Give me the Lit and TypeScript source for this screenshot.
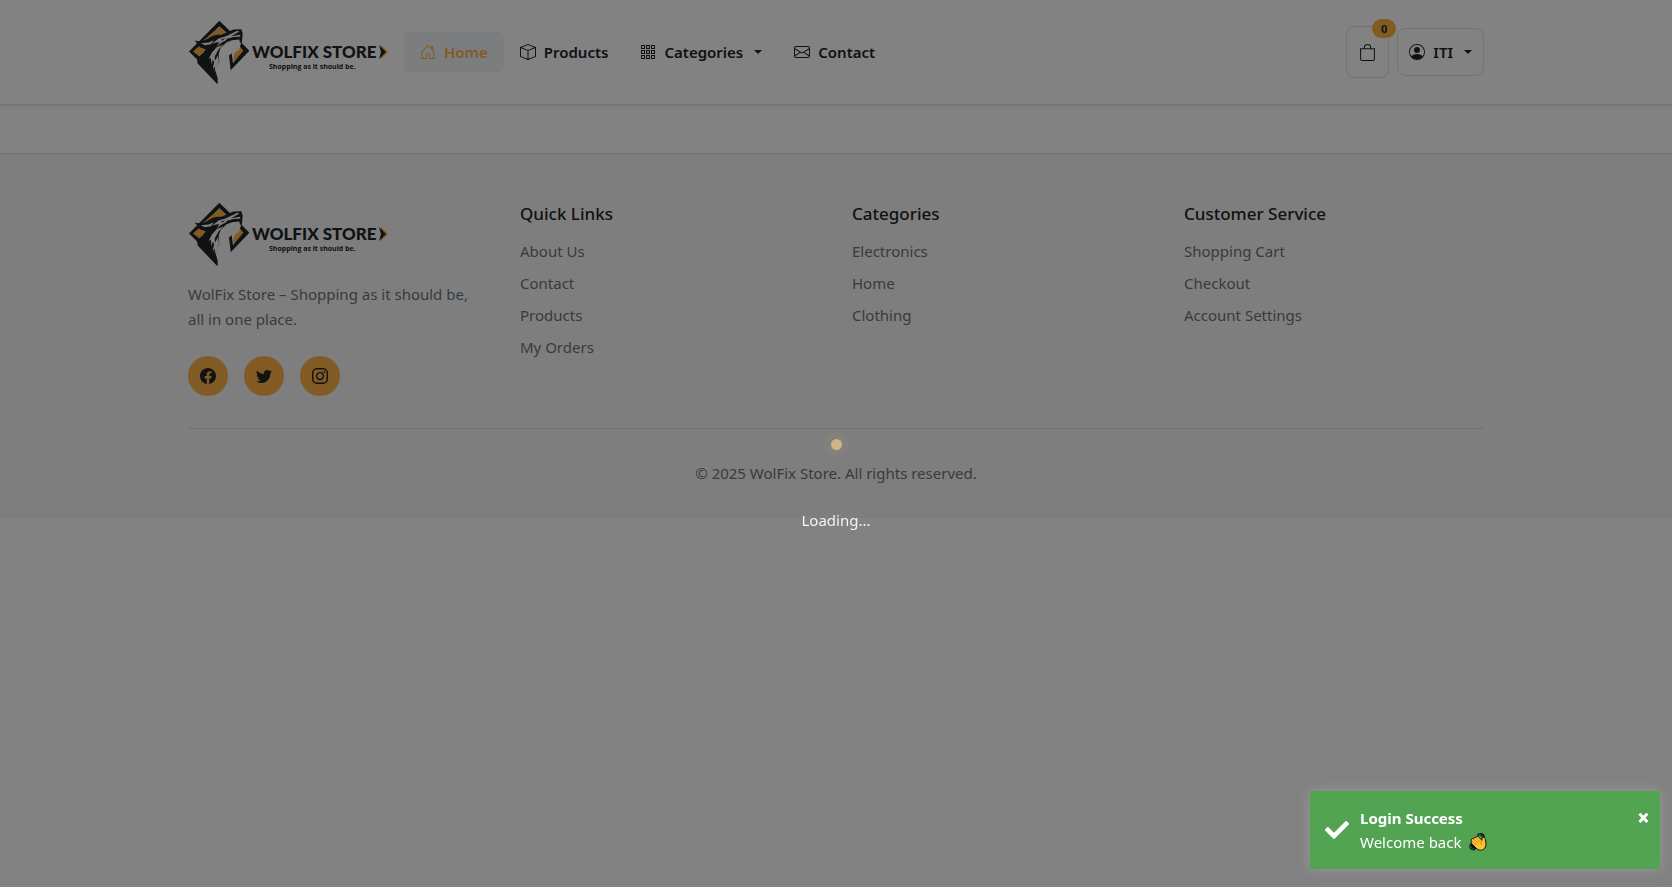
import { LitElement, html, css, svg } from "lit";
import { customElement, property, state } from "lit/decorators.js";

const icons = {
  house: svg`<path d="M8.354 1.146a.5.5 0 0 0-.708 0l-6 6A.5.5 0 0 0 1.5 7.5v7a.5.5 0 0 0 .5.5h4.5a.5.5 0 0 0 .5-.5v-4h2v4a.5.5 0 0 0 .5.5H14a.5.5 0 0 0 .5-.5v-7a.5.5 0 0 0-.146-.354L13 5.793V2.5a.5.5 0 0 0-.5-.5h-1a.5.5 0 0 0-.5.5v1.293zM2.5 14V7.707l5.5-5.5 5.5 5.5V14H10v-4a.5.5 0 0 0-.5-.5h-3a.5.5 0 0 0-.5.5v4z"/>`,
  box: svg`<path fill-rule="evenodd" d="M8.186 1.113a.5.5 0 0 0-.372 0L1.846 3.5 8 5.961 14.154 3.5zM15 4.239l-6.5 2.6v7.922l6.5-2.6V4.24zM7.5 14.762V6.838L1 4.239v7.923zM7.443.184a1.5 1.5 0 0 1 1.114 0l7.129 2.852A.5.5 0 0 1 16 3.5v8.662a1 1 0 0 1-.629.928l-7.185 2.874a.5.5 0 0 1-.372 0L.63 13.09a1 1 0 0 1-.63-.928V3.5a.5.5 0 0 1 .314-.464z"/>`,
  grid: svg`<g fill="none" stroke="currentColor">${[1.5, 6.5, 11.5].map((y) =>
    [1.5, 6.5, 11.5].map((x) => svg`<rect x=${x} y=${y} width="3" height="3"/>`)
  )}</g>`,
  envelope: svg`<path d="M0 4a2 2 0 0 1 2-2h12a2 2 0 0 1 2 2v8a2 2 0 0 1-2 2H2a2 2 0 0 1-2-2zm2-1a1 1 0 0 0-1 1v.217l7 4.2 7-4.2V4a1 1 0 0 0-1-1zm13 2.383-4.708 2.825L15 11.105zm-.034 6.876-5.64-3.471L8 9.583l-1.326-.795-5.64 3.47A1 1 0 0 0 2 13h12a1 1 0 0 0 .966-.741M1 11.105l4.708-2.897L1 5.383z"/>`,
  bag: svg`<path d="M8 1a2.5 2.5 0 0 1 2.5 2.5V4h-5v-.5A2.5 2.5 0 0 1 8 1m3.5 3v-.5a3.5 3.5 0 1 0-7 0V4H1v10a2 2 0 0 0 2 2h10a2 2 0 0 0 2-2V4zM2 5h12v9a1 1 0 0 1-1 1H3a1 1 0 0 1-1-1z"/>`,
  person: svg`<path d="M11 6a3 3 0 1 1-6 0 3 3 0 0 1 6 0"/><path fill-rule="evenodd" d="M0 8a8 8 0 1 1 16 0A8 8 0 0 1 0 8m8-7a7 7 0 0 0-5.468 11.37C3.242 11.226 4.805 10 8 10s4.757 1.225 5.468 2.37A7 7 0 0 0 8 1"/>`,
  facebook: svg`<path d="M16 8.049c0-4.446-3.582-8.05-8-8.05C3.58 0-.002 3.603-.002 8.05c0 4.017 2.926 7.347 6.75 7.951v-5.625h-2.03V8.05H6.75V6.275c0-2.017 1.195-3.131 3.022-3.131.876 0 1.791.157 1.791.157v1.98h-1.009c-.993 0-1.303.621-1.303 1.258v1.51h2.218l-.354 2.326H9.25V16c3.824-.604 6.75-3.934 6.75-7.951"/>`,
  twitter: svg`<path d="M5.026 15c6.038 0 9.341-5.003 9.341-9.334q.002-.211-.006-.422A6.7 6.7 0 0 0 16 3.542a6.7 6.7 0 0 1-1.889.518 3.3 3.3 0 0 0 1.447-1.817 6.5 6.5 0 0 1-2.087.793A3.286 3.286 0 0 0 7.875 6.03a9.32 9.32 0 0 1-6.767-3.429 3.29 3.29 0 0 0 1.018 4.382A3.3 3.3 0 0 1 .64 6.575v.045a3.29 3.29 0 0 0 2.632 3.218 3.2 3.2 0 0 1-.865.115 3 3 0 0 1-.614-.057 3.28 3.28 0 0 0 3.067 2.277A6.6 6.6 0 0 1 .78 13.58a6 6 0 0 1-.78-.045A9.34 9.34 0 0 0 5.026 15"/>`,
  instagram: svg`<g fill="none" stroke="currentColor" stroke-width="1.45"><rect x=".72" y=".72" width="14.56" height="14.56" rx="4"/><circle cx="8" cy="8" r="3.4"/></g><circle cx="12.27" cy="3.73" r=".96"/>`,
};

type IconName = keyof typeof icons;

const icon = (name: IconName, cls = "icon") =>
  html`<svg class=${cls} viewBox="0 0 16 16" fill="currentColor" aria-hidden="true">${icons[name]}</svg>`;

@customElement("store-logo")
export class StoreLogo extends LitElement {
  static styles = css`
    :host { display: block; }
    .logo { display: block; width: 200px; height: 64px; }
    .name { font: 900 17px Lato, sans-serif; }
    .tagline { font: 700 7px "Open Sans", sans-serif; }
  `;

  render() {
    return html`
      <svg class="logo" viewBox="0 0 200 64" role="img" aria-label="WolFix Store" fill="#212529">
        <g transform="translate(-4 -3.5) scale(.3333)">
          <path d="M15 105 106 13l46 44-12 3-34-31-74 76 16 16-8 9z"/>
          <path fill="#ffb347" d="M52 77 106 31l28 24-30 6-16 14-26 6zM27 105l17-15 14 6 10 8-14 6-6 11zM182 103l-14-14-2 10-14 10-4 14 2 16z"/>
          <path d="m172 78 24 25-56 58-5-44 8-7 4 30 31-37-10-13z"/>
          <path d="M32 72c20 6 34-2 46-10 12-7 24-8 34-7l36-16 24-1 4 12-1 16-2 14-5-2-2-9-22 2-16 6-18 17-6 18 2 24-8 14-4 12 7 24v18l-60-63-2-14 20-20 6-8-16-6z"/>
          <path fill="#fafafa" d="m104 66 22-7 34-16 6 2-24 14 26-4 1 5-24 3-14 6-19 10-14 12 8-14-10 1-13 4zM50 80l24-2 15-7-8 12-18 3zM118 84l-14 14-12 22 2 20-8-10-3 14-3-20-6 3 10-19 14-16zM102 116l3 18-7 20-6 12 1-16-7 8 4-20z"/>
          <path d="m128 67 30-7-14 9-18 6zM112 68l12-3-10 8z"/>
        </g>
        <text class="name" x="64" y="38">WOLFIX STORE</text>
        <text class="tagline" x="81" y="49">Shopping as it should be.</text>
        <path fill="#ffb347" d="M193 25l7 7-7 7z"/>
        <path d="M191 25l7 7-7 7 2-7z"/>
      </svg>
    `;
  }
}

@customElement("store-header")
export class StoreHeader extends LitElement {
  @property() active = "Home";

  static styles = css`
    :host { display: block; background: #fff; border-bottom: 1px solid #dee2e6; box-shadow: 0 2px 4px rgba(0, 0, 0, 0.075); }
    a { color: inherit; text-decoration: none; }
    .bar { display: flex; align-items: center; max-width: 1296px; margin: 0 auto; padding: 20px 12px; }
    .menu { display: flex; margin: 0 0 0 16px; padding: 0; list-style: none; flex: 1; }
    .link { display: flex; align-items: center; gap: 8px; height: 40px; padding: 0 16px; border: 0; border-radius: 6px; background: none; color: #212529; font: 600 15px/24px "Noto Sans", sans-serif; }
    .active { background: #f1f5f9; color: #ffb347; }
    .icon { width: 16px; height: 16px; flex: none; }
    .caret { border: 4px solid transparent; border-top-color: currentColor; border-bottom: 0; margin-left: 3px; }
    .actions { display: flex; align-items: center; gap: 8px; }
    .cart, .user { display: flex; align-items: center; box-sizing: border-box; border: 1px solid #dee2e6; border-radius: 8px; background: #fff; color: #212529; }
    .cart { position: relative; height: 52px; padding: 0 12px; }
    .bag { width: 17px; height: 17px; }
    .badge { position: absolute; top: -8px; right: -8px; padding: 0 9px; border-radius: 10px; background: #ffb347; font: 700 11px/19px "Noto Sans", sans-serif; }
    .user { gap: 8px; height: 48px; padding: 0 11px; font: 600 15px/24px "Noto Sans", sans-serif; }
  `;

  private item(name: IconName, label: string) {
    return html`<li><a class="link ${label === this.active ? "active" : ""}" href="#">${icon(name)}${label}</a></li>`;
  }

  render() {
    return html`
      <nav class="bar">
        <a href="#"><store-logo></store-logo></a>
        <ul class="menu">
          ${this.item("house", "Home")}
          ${this.item("box", "Products")}
          <li><button class="link">${icon("grid")}Categories<span class="caret"></span></button></li>
          ${this.item("envelope", "Contact")}
        </ul>
        <div class="actions">
          <button class="cart" aria-label="Shopping cart">${icon("bag", "bag")}<span class="badge">0</span></button>
          <button class="user">${icon("person")}ITI<span class="caret"></span></button>
        </div>
      </nav>
    `;
  }
}

@customElement("store-footer")
export class StoreFooter extends LitElement {
  static styles = css`
    :host { display: block; background: #f8f8f8; border-top: 1px solid #dee2e6; color: #6c757d; font: 400 15px/25px "Noto Sans", sans-serif; }
    a { color: inherit; text-decoration: none; }
    .inner { max-width: 1296px; margin: 0 auto; padding: 48px 12px 32px; }
    .columns { display: grid; grid-template-columns: repeat(4, 1fr); gap: 32px; }
    .about { margin: 16px 0 24px; padding-right: 12px; }
    .social { display: flex; gap: 16px; }
    .round { display: grid; place-items: center; width: 40px; height: 40px; border-radius: 50%; background: #ffb347; color: #212529; }
    .icon { width: 16px; height: 16px; }
    .title { margin: 0 0 13px; color: #212529; font-size: 17px; font-weight: 500; line-height: 24px; }
    .list { display: grid; gap: 8px; margin: 0; padding: 0; list-style: none; line-height: 24px; }
    .copyright { margin: 32px 0 0; padding-top: 32px; border-top: 1px solid #dee2e6; text-align: center; }
  `;

  private groups = [
    { title: "Quick Links", links: ["About Us", "Contact", "Products", "My Orders"] },
    { title: "Categories", links: ["Electronics", "Home", "Clothing"] },
    { title: "Customer Service", links: ["Shopping Cart", "Checkout", "Account Settings"] },
  ];

  render() {
    return html`
      <div class="inner">
        <div class="columns">
          <div>
            <store-logo></store-logo>
            <p class="about">WolFix Store – Shopping as it should be, all in one place.</p>
            <div class="social">
              ${(["facebook", "twitter", "instagram"] as IconName[]).map(
                (n) => html`<a class="round" href="#" aria-label=${n}>${icon(n)}</a>`
              )}
            </div>
          </div>
          ${this.groups.map(
            (g) => html`<div>
              <h5 class="title">${g.title}</h5>
              <ul class="list">${g.links.map((l) => html`<li><a href="#">${l}</a></li>`)}</ul>
            </div>`
          )}
        </div>
        <p class="copyright">© 2025 WolFix Store. All rights reserved.</p>
      </div>
    `;
  }
}

@customElement("store-toast")
export class StoreToast extends LitElement {
  static styles = css`
    :host { position: fixed; right: 12px; bottom: 18px; z-index: 20; box-sizing: border-box; width: 350px; padding: 15px 10px 15px 15px; display: grid; grid-template-columns: 24px 1fr auto; column-gap: 11px; align-items: center; border-radius: 3px; background: #52a352; box-shadow: 0 0 12px #999; color: #fff; font: 400 15px/24px "Noto Sans", sans-serif; }
    .check { width: 24px; height: 24px; }
    .title { font-weight: 700; }
    .message { display: flex; align-items: center; gap: 7px; }
    .wave { width: 18px; height: 18px; }
    .close { align-self: start; padding: 0; border: 0; background: none; color: #fff; font: 900 22px/22px "Noto Sans", sans-serif; }
  `;

  render() {
    return html`
      <svg class="check" viewBox="0 0 512 512" fill="currentColor" aria-hidden="true"><path d="M173.898 439.404l-166.4-166.4c-9.997-9.997-9.997-26.206 0-36.204l36.203-36.204c9.997-9.998 26.207-9.998 36.204 0L192 312.69 432.095 72.596c9.997-9.997 26.207-9.997 36.204 0l36.203 36.204c9.997 9.997 9.997 26.206 0 36.204l-294.4 294.401c-9.998 9.997-26.207 9.997-36.204-.001z"/></svg>
      <div role="alert">
        <div class="title">Login Success</div>
        <div class="message">
          <span>Welcome back</span>
          <svg class="wave" viewBox="0 0 54 54" role="img" aria-label="waving hand">
            <path d="M28 5c8-3 14 3 15 11M35 3c7 1 10 6 9 12M4 37c0 8 4 12 11 12M8 33c0 8 4 12 12 12" fill="none" stroke="#111" stroke-width="7" stroke-linecap="round"/>
            <path d="M30 5c7-2 11 3 13 9M4 38c0 6 4 10 10 10" fill="none" stroke="#1d6f98" stroke-width="3" stroke-linecap="round"/>
            <path d="M7 20c1-4 4-4 7-2 0-5 4-7 7-4 1-5 5-5 8-2l10 10c0-5 0-9 4-9 5 0 6 5 7 11 2 11 1 17-4 23-7 7-17 6-24-1L8 32c-2-3-2-5 1-7-3-1-3-3-2-5z" fill="#fdc02f" stroke="#111" stroke-width="3" stroke-linejoin="round"/>
            <path d="m14 18 11 11M21 14l11 11M9 25l11 10M39 22c-4 4-5 8-2 13" fill="none" stroke="#b9791a" stroke-width="2" stroke-linecap="round"/>
          </svg>
        </div>
      </div>
      <button class="close" aria-label="Close" @click=${() => this.dispatchEvent(new CustomEvent("dismiss"))}>×</button>
    `;
  }
}

@customElement("app-root")
export class AppRoot extends LitElement {
  @state() private loading = true;
  @state() private toast = true;

  static styles = css`
    :host { display: block; min-height: 100vh; background: #fff; }
    .content { padding-top: 48px; }
    .overlay { position: fixed; inset: 0; z-index: 10; display: flex; flex-direction: column; align-items: center; justify-content: center; gap: 58px; padding-top: 83px; box-sizing: border-box; background: rgba(0, 0, 0, 0.49); color: #f2f2f2; font: 400 15px/24px "Noto Sans", sans-serif; }
    .ball { width: 11px; height: 11px; border-radius: 50%; background: #d5b388; box-shadow: 0 0 0 7px rgba(150, 140, 110, 0.2); }
  `;

  render() {
    return html`
      <store-header></store-header>
      <main class="content"></main>
      <store-footer></store-footer>
      ${this.loading
        ? html`<div class="overlay" role="status"><div class="ball"></div><div>Loading...</div></div>`
        : null}
      ${this.toast ? html`<store-toast @dismiss=${() => (this.toast = false)}></store-toast>` : null}
    `;
  }
}
